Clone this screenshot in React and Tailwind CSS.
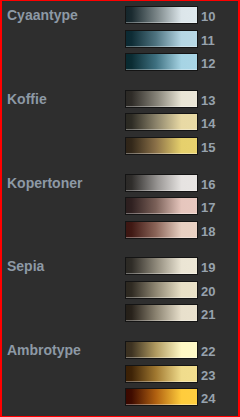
const groups = [
  {
    name: 'Cyaantype',
    swatches: [
      { n: 10, cls: 'bg-[linear-gradient(to_right,#15262b_0%,#1b2b30_8%,#7f8a8c_45%,#dce6ea_78%,#dfe9ed_100%)]' },
      { n: 11, cls: 'bg-[linear-gradient(to_right,#0b2a33_0%,#0e2c35_8%,#4e7380_42%,#b5d6e4_78%,#b9d9e6_100%)]' },
      { n: 12, cls: 'bg-[linear-gradient(to_right,#082a30_0%,#0b2c33_8%,#3e7080_42%,#a6d4e4_78%,#aad6e6_100%)]' },
    ],
  },
  {
    name: 'Koffie',
    swatches: [
      { n: 13, cls: 'bg-[linear-gradient(to_right,#2b2925_0%,#2f2c28_8%,#8a877c_45%,#e9e5d5_78%,#ebe7d8_100%)]' },
      { n: 14, cls: 'bg-[linear-gradient(to_right,#2a2922_0%,#2e2c25_8%,#8a826a_42%,#e8d9a4_78%,#e9dba6_100%)]' },
      { n: 15, cls: 'bg-[linear-gradient(to_right,#2e2418_0%,#33281a_8%,#8a7048_42%,#e6d06c_78%,#e8d26e_100%)]' },
    ],
  },
  {
    name: 'Kopertoner',
    swatches: [
      { n: 16, cls: 'bg-[linear-gradient(to_right,#2b2927_0%,#2f2d2b_8%,#9a9795_45%,#e6e3e1_78%,#e8e5e3_100%)]' },
      { n: 17, cls: 'bg-[linear-gradient(to_right,#2b1e1e_0%,#302121_8%,#7a6058_42%,#e6c6bd_78%,#e8c9c0_100%)]' },
      { n: 18, cls: 'bg-[linear-gradient(to_right,#3c1612_0%,#401914_8%,#8a6458_42%,#e8d0c2_78%,#ead2c4_100%)]' },
    ],
  },
  {
    name: 'Sepia',
    swatches: [
      { n: 19, cls: 'bg-[linear-gradient(to_right,#2b2924_0%,#2f2c27_8%,#958f80_45%,#ebe5d4_78%,#ede7d6_100%)]' },
      { n: 20, cls: 'bg-[linear-gradient(to_right,#2c2820_0%,#302b23_8%,#8e8672_42%,#e8e0c6_78%,#eae2c8_100%)]' },
      { n: 21, cls: 'bg-[linear-gradient(to_right,#241f18_0%,#28221b_8%,#8a8270_42%,#e8e0cc_78%,#eae2ce_100%)]' },
    ],
  },
  {
    name: 'Ambrotype',
    swatches: [
      { n: 22, cls: 'bg-[linear-gradient(to_right,#3a3020_0%,#3e3322_8%,#b09a60_42%,#fff8c4_78%,#fffac8_100%)]' },
      { n: 23, cls: 'bg-[linear-gradient(to_right,#3a2005_0%,#3e2307_8%,#a07830_42%,#f0dc8c_78%,#f2de8e_100%)]' },
      { n: 24, cls: 'bg-[linear-gradient(to_right,#3a0800_0%,#400c00_8%,#b06010_42%,#ffcc3c_78%,#ffce40_100%)]' },
    ],
  },
];

const Swatch = ({ n, cls }) => (
  <div className="flex h-[18px] items-end">
    <div
      className={`h-[18px] w-[73px] border border-[#141414] shadow-[inset_0_-1px_0_rgba(255,255,255,0.35)] ${cls}`}
    />
    <span className="ml-[3px] text-[13px] font-bold leading-[14px] text-[#97a2ad]">{n}</span>
  </div>
);

export default function App() {
  return (
    <div
      className="flex h-[417px] w-[240px] flex-col gap-[18.75px] border-x-2 border-y border-[#ff0000] bg-[#2e2e2e] pt-[5px]"
      style={{ fontFamily: '"Liberation Sans", Arial, sans-serif' }}
    >
      {groups.map(group => (
        <div key={group.name} className="flex">
          <div className="w-[123px] pl-[5px] text-[14px] font-bold leading-[18px] text-[#8d99a5]">
            {group.name}
          </div>
          <div className="flex flex-col gap-[5.5px]">
            {group.swatches.map(s => (
              <Swatch key={s.n} n={s.n} cls={s.cls} />
            ))}
          </div>
        </div>
      ))}
    </div>
  );
}
